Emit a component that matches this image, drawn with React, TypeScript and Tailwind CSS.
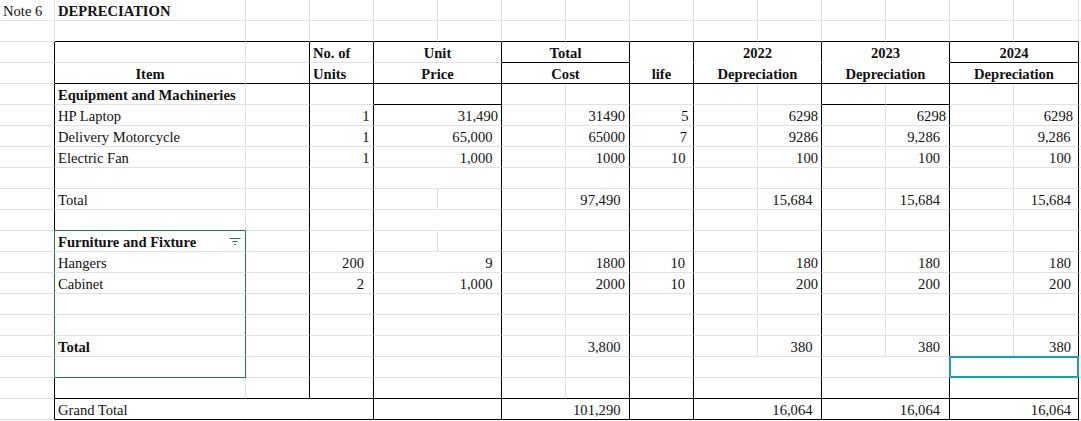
type Line = "g" | "k" | "n" | "e";
type V = [string, string] | undefined;

type Cell = {
  t?: string;
  span?: 1 | 2 | 3;
  al?: "l" | "c" | "r";
  bold?: boolean;
  pr?: string;
  r?: Line;
  b?: Line;
  filter?: boolean;
  sel?: boolean;
};

const rightLine: Record<Line, string> = {
  g: "border-r-[#e1e1e1]",
  k: "border-r-black",
  n: "border-r-transparent",
  e: "border-r-[#217346]",
};

const bottomLine: Record<Line, string> = {
  g: "border-b-[#e1e1e1]",
  k: "border-b-black",
  n: "border-b-transparent",
  e: "border-b-[#217346]",
};

const spanClass = { 1: "", 2: "col-span-2", 3: "col-span-3" };

function plainRow(first: Cell[] = [], bottom: Line = "g"): Cell[] {
  const cells: Cell[] = [];
  for (let i = 0; i < 15; i++) {
    cells.push({ r: "g", b: i === 0 ? "g" : bottom, ...(first[i] ?? {}) });
  }
  return cells;
}

function dataRow(p: {
  edge?: Line;
  item?: string;
  bold?: boolean;
  filter?: boolean;
  bb?: Line;
  d?: V;
  ef?: V;
  split?: boolean;
  h?: V;
  i?: V;
  k?: V;
  m?: V;
  o?: V;
}): Cell[] {
  const edge = p.edge ?? "k";
  const val = (v: V, extra: Partial<Cell> = {}): Cell => ({
    t: v?.[0],
    pr: v?.[1],
    al: "r",
    r: "k",
    ...extra,
  });
  return [
    { r: edge },
    { t: p.item, bold: p.bold, filter: p.filter, r: edge === "e" ? "e" : "g", b: p.bb ?? "g" },
    { r: "k" },
    val(p.d),
    ...(p.split ? [{ r: "g" } as Cell, { r: "k" } as Cell] : [val(p.ef, { span: 2 })]),
    { r: "g" },
    val(p.h),
    val(p.i),
    { r: "g" },
    val(p.k),
    { r: "g" },
    val(p.m),
    { r: "g" },
    val(p.o),
  ];
}

const rows: Cell[][] = [
  plainRow([{ t: "Note 6" }, { t: "DEPRECIATION", bold: true }]),
  plainRow([], "k"),
  [
    { r: "k" },
    { r: "g" },
    { r: "k" },
    { t: "No. of", bold: true, r: "k" },
    { t: "Unit", bold: true, al: "c", span: 2, r: "k" },
    { t: "Total", bold: true, al: "c", span: 2, r: "k", b: "k" },
    { r: "k", b: "n" },
    { t: "2022", bold: true, al: "c", span: 2, r: "k", b: "n" },
    { t: "2023", bold: true, al: "c", span: 2, r: "k", b: "n" },
    { t: "2024", bold: true, al: "c", span: 2, r: "k", b: "k" },
  ],
  [
    { r: "k" },
    { t: "Item", bold: true, al: "c", r: "g", b: "k" },
    { r: "k", b: "k" },
    { t: "Units", bold: true, r: "k", b: "k" },
    { t: "Price", bold: true, al: "c", span: 2, r: "k", b: "k" },
    { t: "Cost", bold: true, al: "c", span: 2, r: "k", b: "k" },
    { t: "life", bold: true, al: "c", r: "k", b: "k" },
    { t: "Depreciation", bold: true, al: "c", span: 2, r: "k", b: "k" },
    { t: "Depreciation", bold: true, al: "c", span: 2, r: "k", b: "k" },
    { t: "Depreciation", bold: true, al: "c", span: 2, r: "k", b: "k" },
  ],
  [
    { r: "k" },
    { t: "Equipment and Machineries", bold: true, r: "g" },
    { r: "k" },
    { r: "k" },
    { span: 2, r: "k", b: "k" },
    { r: "g" },
    { r: "k" },
    { r: "k" },
    { r: "g" },
    { r: "k" },
    { r: "g", b: "k" },
    { r: "k", b: "k" },
    { r: "g" },
    { r: "k" },
  ],
  dataRow({
    item: "HP Laptop",
    d: ["1", "pr-[3.5px]"],
    ef: ["31,490", "pr-[3px]"],
    h: ["31490", "pr-[4px]"],
    i: ["5", "pr-[4.5px]"],
    k: ["6298", "pr-[3px]"],
    m: ["6298", "pr-[3px]"],
    o: ["6298", "pr-[5px]"],
  }),
  dataRow({
    item: "Delivery Motorcycle",
    d: ["1", "pr-[3.5px]"],
    ef: ["65,000", "pr-[8.5px]"],
    h: ["65000", "pr-[4px]"],
    i: ["7", "pr-[6px]"],
    k: ["9286", "pr-[3px]"],
    m: ["9,286", "pr-[9px]"],
    o: ["9,286", "pr-[7.5px]"],
  }),
  dataRow({
    item: "Electric Fan",
    d: ["1", "pr-[3.5px]"],
    ef: ["1,000", "pr-[8.5px]"],
    h: ["1000", "pr-[4px]"],
    i: ["10", "pr-[7.5px]"],
    k: ["100", "pr-[3px]"],
    m: ["100", "pr-[9px]"],
    o: ["100", "pr-[7px]"],
  }),
  dataRow({}),
  dataRow({
    item: "Total",
    split: true,
    h: ["97,490", "pr-[8.5px]"],
    k: ["15,684", "pr-[8.5px]"],
    m: ["15,684", "pr-[9px]"],
    o: ["15,684", "pr-[7px]"],
  }),
  dataRow({ bb: "e" }),
  dataRow({ edge: "e", item: "Furniture and Fixture", bold: true, filter: true, split: true }),
  dataRow({
    edge: "e",
    item: "Hangers",
    d: ["200", "pr-[9px]"],
    ef: ["9", "pr-[8.5px]"],
    h: ["1800", "pr-[4px]"],
    i: ["10", "pr-[8px]"],
    k: ["180", "pr-[3px]"],
    m: ["180", "pr-[9px]"],
    o: ["180", "pr-[7px]"],
  }),
  dataRow({
    edge: "e",
    item: "Cabinet",
    d: ["2", "pr-[9px]"],
    ef: ["1,000", "pr-[8.5px]"],
    h: ["2000", "pr-[4px]"],
    i: ["10", "pr-[8px]"],
    k: ["200", "pr-[3px]"],
    m: ["200", "pr-[9px]"],
    o: ["200", "pr-[7px]"],
  }),
  dataRow({ edge: "e" }),
  dataRow({ edge: "e" }),
  dataRow({
    edge: "e",
    item: "Total",
    bold: true,
    h: ["3,800", "pr-[8.5px]"],
    k: ["380", "pr-[8.5px]"],
    m: ["380", "pr-[9px]"],
    o: ["380", "pr-[7px]"],
  }),
  [
    { r: "e" },
    { r: "e", b: "e" },
    { r: "k" },
    { r: "k" },
    { span: 2, r: "k" },
    { r: "g" },
    { r: "k" },
    { r: "k" },
    { span: 2, r: "k" },
    { span: 2, r: "k" },
    { span: 2, r: "k", sel: true },
  ],
  [
    { r: "k" },
    { r: "g", b: "k" },
    { r: "k", b: "k" },
    { r: "k", b: "k" },
    { span: 2, r: "k", b: "k" },
    { r: "g", b: "k" },
    { r: "k", b: "k" },
    { r: "k", b: "k" },
    { span: 2, r: "k", b: "k" },
    { span: 2, r: "k", b: "k" },
    { span: 2, r: "k", b: "k" },
  ],
  [
    { r: "k" },
    { t: "Grand Total", span: 3, r: "k", b: "k" },
    { span: 2, r: "k", b: "k" },
    { t: "101,290", al: "r", pr: "pr-[8.5px]", span: 2, r: "k", b: "k" },
    { r: "k", b: "k" },
    { t: "16,064", al: "r", pr: "pr-[8.5px]", span: 2, r: "k", b: "k" },
    { t: "16,064", al: "r", pr: "pr-[9px]", span: 2, r: "k", b: "k" },
    { t: "16,064", al: "r", pr: "pr-[7px]", span: 2, r: "k", b: "k" },
  ],
  plainRow(),
];

function FilterIcon() {
  return (
    <svg width="12" height="8" viewBox="0 0 12 8" className="mb-[4px] mr-[4px] shrink-0">
      <path d="M0.5 0.5H11.5M3.5 3.5H8.5M5 6.5H7" stroke="#217346" strokeWidth="1" fill="none" />
    </svg>
  );
}

function SheetCell({ cell }: { cell: Cell }) {
  const align =
    cell.filter
      ? "justify-between pl-[3px]"
      : cell.al === "r"
        ? "justify-end"
        : cell.al === "c"
          ? "justify-center"
          : "justify-start pl-[3px]";

  return (
    <div
      className={`relative flex h-[21px] items-end whitespace-nowrap border-r border-b pb-px leading-[16px] ${
        spanClass[cell.span ?? 1]
      } ${rightLine[cell.r ?? "g"]} ${bottomLine[cell.b ?? "g"]} ${align} ${cell.pr ?? ""} ${
        cell.bold ? "font-bold" : ""
      }`}
    >
      {cell.t ? <span>{cell.t}</span> : null}
      {cell.filter ? <FilterIcon /> : null}
      {cell.sel ? <div className="absolute -inset-px border-2 border-[#12a0bf]" /> : null}
    </div>
  );
}

export default function App() {
  return (
    <div className="h-[421px] w-[1081px] overflow-hidden bg-white font-['Liberation_Serif','Times_New_Roman',serif] text-[14.6px] text-[#111]">
      <div className="grid grid-cols-[55px_191px_repeat(12,64px)_65px_2px]">
        {rows.map((row, ri) => (
          <div key={ri} className="contents">
            {row.map((cell, ci) => (
              <SheetCell key={ci} cell={cell} />
            ))}
            <div className="h-[21px] border-b border-b-[#e1e1e1]" />
          </div>
        ))}
      </div>
    </div>
  );
}
